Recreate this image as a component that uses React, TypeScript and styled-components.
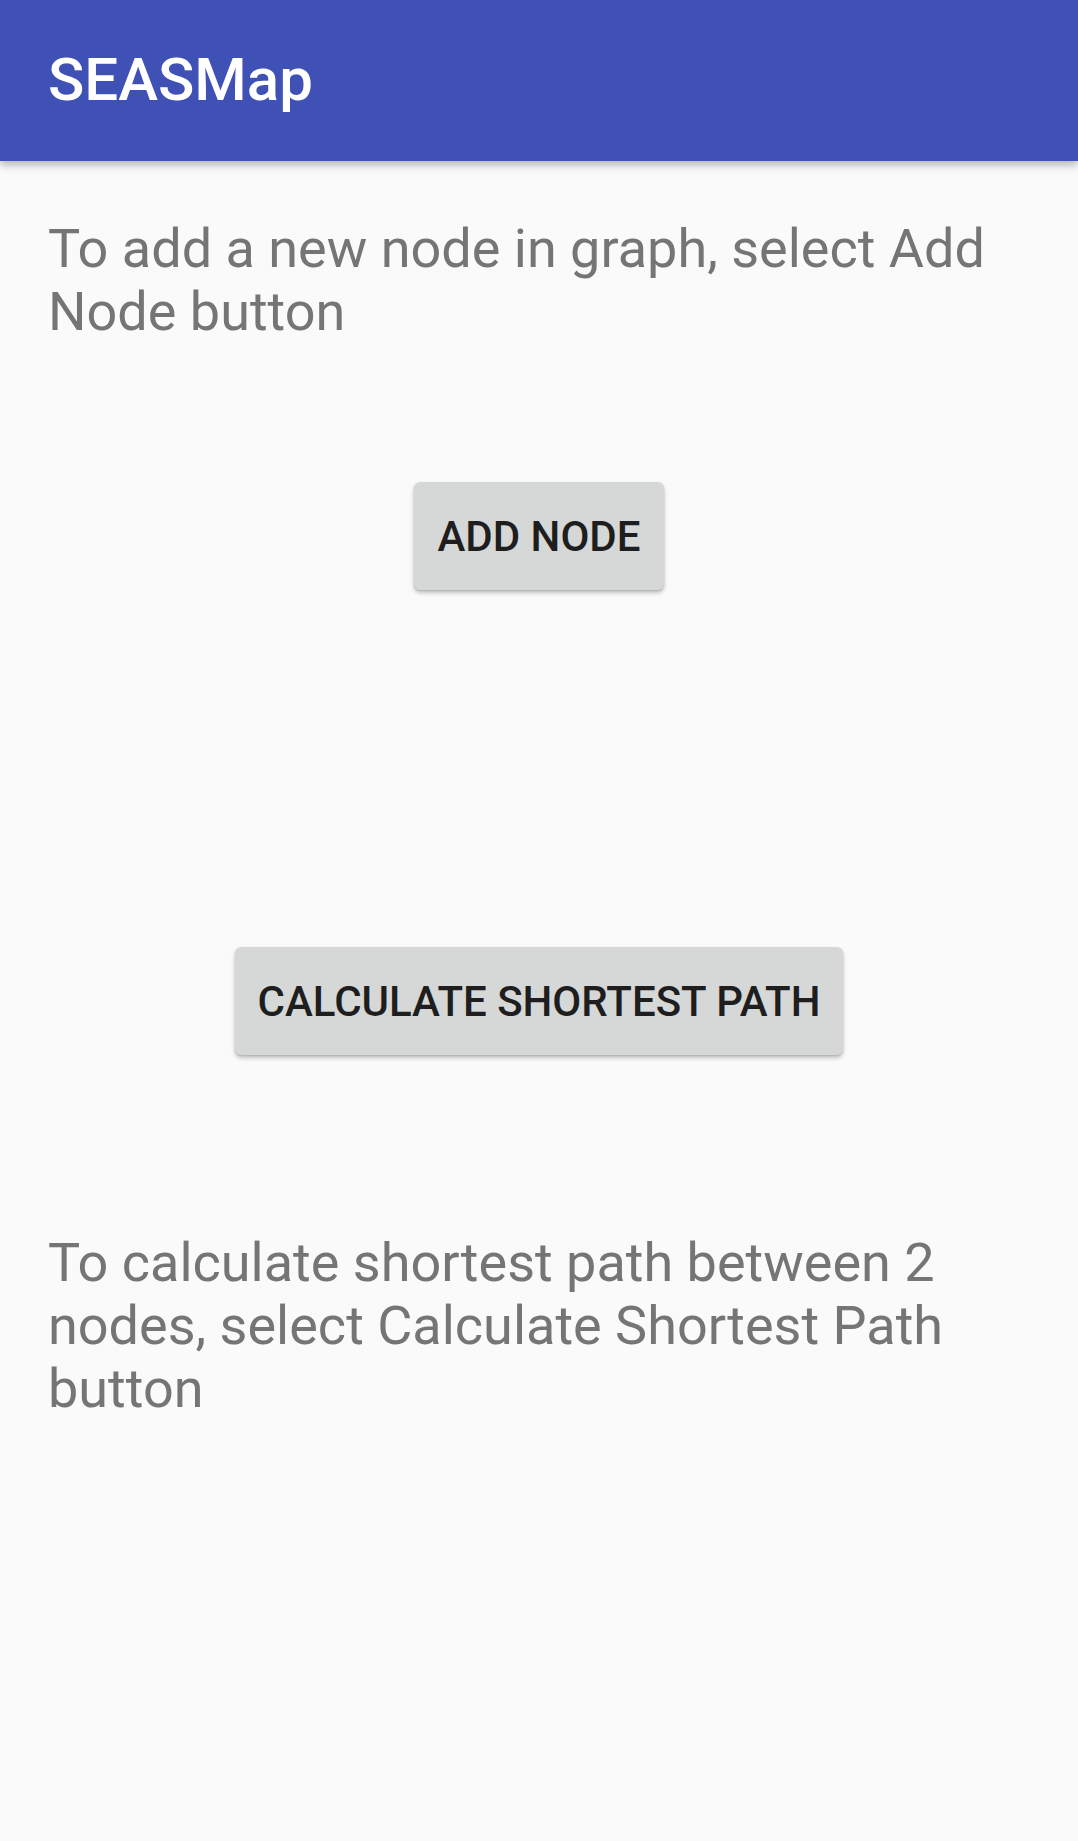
import React from "react";
import styled, { createGlobalStyle } from "styled-components";

const Global = createGlobalStyle`
  html, body { margin: 0; padding: 0; background: #fafafa; }
  body { font-family: Roboto, "Noto Sans", sans-serif; }
  * { box-sizing: border-box; }
`;

const Screen = styled.div`
  width: 1078px;
  min-height: 1841px;
  background: #fafafa;
  display: flex;
  flex-direction: column;
`;

const AppBar = styled.header`
  height: 161px;
  background: #3f51b5;
  display: flex;
  align-items: center;
  padding: 0 48px;
  padding-bottom: 2px;
  box-shadow: 0 4px 8px rgba(0, 0, 0, 0.28);
  position: relative;
  z-index: 1;
`;

const Title = styled.h1`
  margin: 0;
  color: #ffffff;
  font-family: Roboto, sans-serif;
  font-weight: 500;
  font-size: 60px;
  line-height: 70px;
`;

const Content = styled.main`
  display: flex;
  flex-direction: column;
  padding: 0 48px;
`;

const Hint = styled.p<{ $top: number }>`
  margin: ${(p) => p.$top}px 0 0;
  color: #757575;
  font-family: Roboto, sans-serif;
  font-size: 54px;
  line-height: 63px;
  font-weight: 400;
`;

const ButtonRow = styled.div<{ $top: number }>`
  margin-top: ${(p) => p.$top}px;
  display: flex;
  justify-content: center;
`;

const RaisedButton = styled.button`
  height: 108px;
  padding: 0 23px;
  border: none;
  border-radius: 6px;
  background: #d6d7d7;
  color: #1e1e1e;
  font-family: Roboto, sans-serif;
  font-weight: 500;
  font-size: 42px;
  text-transform: uppercase;
  box-shadow: 0 3px 4px rgba(0, 0, 0, 0.22), 0 1px 2px rgba(0, 0, 0, 0.12);
  cursor: pointer;
`;

export default function App() {
  return (
    <>
      <Global />
      <Screen>
        <AppBar>
          <Title>SEASMap</Title>
        </AppBar>
        <Content>
          <Hint $top={56}>To add a new node in graph, select Add Node button</Hint>
          <ButtonRow $top={139}>
            <RaisedButton>Add Node</RaisedButton>
          </ButtonRow>
          <ButtonRow $top={357}>
            <RaisedButton>Calculate Shortest Path</RaisedButton>
          </ButtonRow>
          <Hint $top={176}>
            To calculate shortest path between 2 nodes, select Calculate Shortest Path button
          </Hint>
        </Content>
      </Screen>
    </>
  );
}
